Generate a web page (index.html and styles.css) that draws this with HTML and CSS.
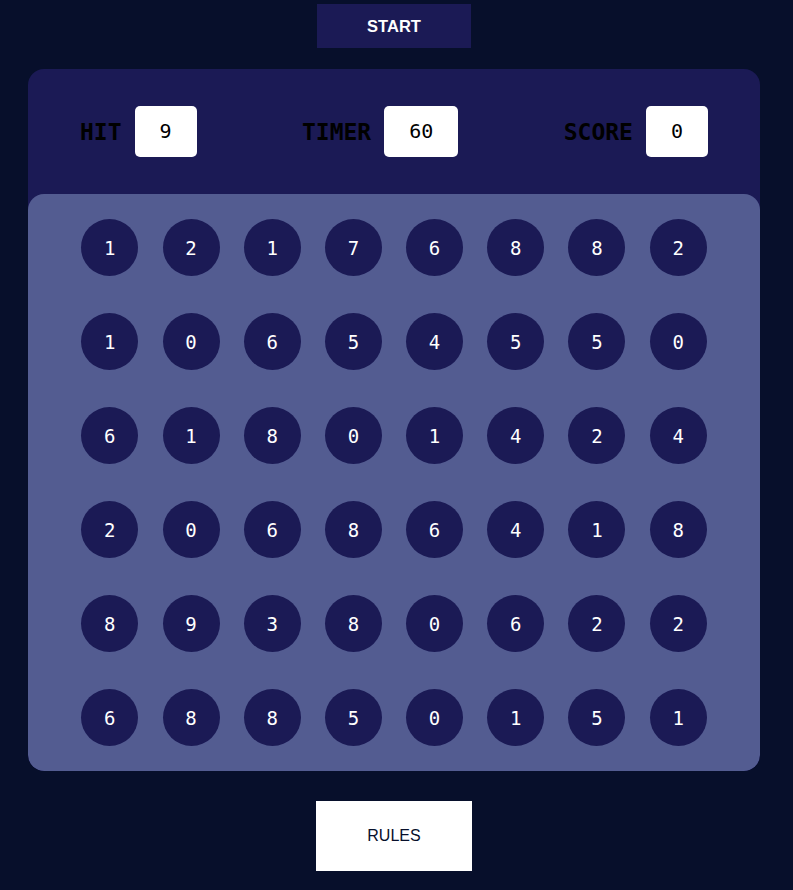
FILE: index.html
```html
<!doctype html>
<html lang="en">
<head>
	<meta charset="UTF-8">
	<meta name="viewport" content="width=device-width, initial-scale=1.0">
	<title>Bubble Game</title>
	<link rel="stylesheet" href="styles.css">
</head>
<body>
	<div class="top">
		<button class="start">START</button>
	</div>
	<div class="game">
		<div class="stats">
			<div class="stat"><span class="label">HIT</span><span class="box">9</span></div>
			<div class="stat"><span class="label">TIMER</span><span class="box">60</span></div>
			<div class="stat"><span class="label">SCORE</span><span class="box">0</span></div>
		</div>
		<div class="board">
			<div class="bubble">1</div><div class="bubble">2</div><div class="bubble">1</div><div class="bubble">7</div>
			<div class="bubble">6</div><div class="bubble">8</div><div class="bubble">8</div><div class="bubble">2</div>
			<div class="bubble">1</div><div class="bubble">0</div><div class="bubble">6</div><div class="bubble">5</div>
			<div class="bubble">4</div><div class="bubble">5</div><div class="bubble">5</div><div class="bubble">0</div>
			<div class="bubble">6</div><div class="bubble">1</div><div class="bubble">8</div><div class="bubble">0</div>
			<div class="bubble">1</div><div class="bubble">4</div><div class="bubble">2</div><div class="bubble">4</div>
			<div class="bubble">2</div><div class="bubble">0</div><div class="bubble">6</div><div class="bubble">8</div>
			<div class="bubble">6</div><div class="bubble">4</div><div class="bubble">1</div><div class="bubble">8</div>
			<div class="bubble">8</div><div class="bubble">9</div><div class="bubble">3</div><div class="bubble">8</div>
			<div class="bubble">0</div><div class="bubble">6</div><div class="bubble">2</div><div class="bubble">2</div>
			<div class="bubble">6</div><div class="bubble">8</div><div class="bubble">8</div><div class="bubble">5</div>
			<div class="bubble">0</div><div class="bubble">1</div><div class="bubble">5</div><div class="bubble">1</div>
		</div>
	</div>
	<div class="bottom">
		<button class="rules">RULES</button>
	</div>
</body>
</html>
```

FILE: styles.css
```css
body {
	margin: 0;
	background-color: #070f2b;
	font-family: "DejaVu Sans Mono", monospace;
}

button {
	border: none;
	cursor: pointer;
	font-family: "Liberation Sans", Arial, sans-serif;
	font-size: 16px;
}

.top {
	display: flex;
	justify-content: center;
	padding: 4px 5px 0 0;
}

.start {
	width: 154px;
	height: 44px;
	background-color: #1b1a55;
	color: #fff;
	font-size: 16.5px;
	font-weight: 700;
}

.game {
	margin: 21px 33px 0 28px;
	overflow: hidden;
	border-radius: 16px;
	background-color: #1b1a55;
}

.stats {
	display: flex;
	justify-content: space-between;
	align-items: center;
	height: 125px;
	padding: 0 52px;
}

.stat {
	display: flex;
	align-items: center;
	gap: 13px;
}

.label {
	font-size: 23px;
	font-weight: 700;
	color: #000;
}

.box {
	padding: 12px 25px;
	border-radius: 5px;
	background-color: #fff;
	color: #000;
	font-size: 20px;
	line-height: 27px;
}

.board {
	display: grid;
	grid-template-columns: repeat(8, 57px);
	justify-content: center;
	column-gap: 24.2px;
	row-gap: 37px;
	padding: 25px 0;
	border-radius: 16px;
	background-color: #535c91;
}

.bubble {
	display: flex;
	justify-content: center;
	align-items: center;
	width: 57px;
	height: 57px;
	border-radius: 50%;
	background-color: #1b1a55;
	color: #fff;
	font-size: 19px;
}

.bottom {
	display: flex;
	justify-content: center;
	padding: 30px 5px 0 0;
}

.rules {
	width: 156px;
	height: 70px;
	background-color: #fff;
	color: #070f2b;
}
```
